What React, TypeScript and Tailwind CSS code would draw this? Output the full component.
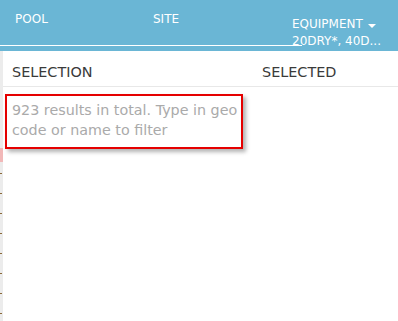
import React from "react";

const marks = [173, 193, 213, 233, 253, 273, 293, 313];

const App = () => {
  return (
    <div
      className="relative w-[398px] h-[321px] overflow-hidden bg-[#6ab6d5]"
      style={{ fontFamily: '"DejaVu Sans", Verdana, sans-serif' }}
    >
      {/* top filter bar */}
      <div className="relative h-[51px] grid grid-cols-[138px_139px_1fr] pl-[15px] text-[12px] text-white">
        <div className="pt-[10px]">POOL</div>
        <div className="pt-[10px]">SITE</div>
        <div className="pt-[16px] leading-[17px]">
          <div className="flex items-center gap-[5px]">
            EQUIPMENT
            <span className="inline-block w-0 h-0 border-l-[4px] border-r-[4px] border-t-[4px] border-l-transparent border-r-transparent border-t-white mt-[2px]" />
          </div>
          <div className="whitespace-nowrap">20DRY*, 40D...</div>
        </div>
        <div className="absolute left-0 top-[45px] w-[302px] h-px bg-white" />
      </div>

      <div className="flex h-[270px]">
        {/* left edge strip */}
        <div className="relative w-[3px] bg-[#ececec]">
          <div className="absolute left-0 top-[97px] w-[3px] h-[14px] bg-[#f2b8b8]" />
          {marks.map((m) => (
            <div
              key={m}
              className="absolute left-0 w-[2px] h-px bg-[#8a6a3a]"
              style={{ top: m - 51 }}
            />
          ))}
        </div>

        {/* dropdown panel */}
        <div className="flex-1 bg-white">
          <div className="grid grid-cols-[250px_1fr] h-[36px] border-b border-[#e8e8e8] text-[14.4px] leading-[18px] text-[#3a3a3a] pt-[12px]">
            <div className="pl-[9px]">SELECTION</div>
            <div className="pl-[9px]">SELECTED</div>
          </div>
          <div className="pt-[7px] pl-[2px]">
            <div className="w-[238px] h-[55px] border-2 border-[#e50000] bg-white shadow-[3px_3px_4px_rgba(0,0,0,0.3)] pl-[5px] pt-[4px] text-[14.3px] leading-[20px] text-[#aaaaaa]">
              923 results in total. Type in geo code or name to filter
            </div>
          </div>
        </div>
      </div>
    </div>
  );
};

export default App;
